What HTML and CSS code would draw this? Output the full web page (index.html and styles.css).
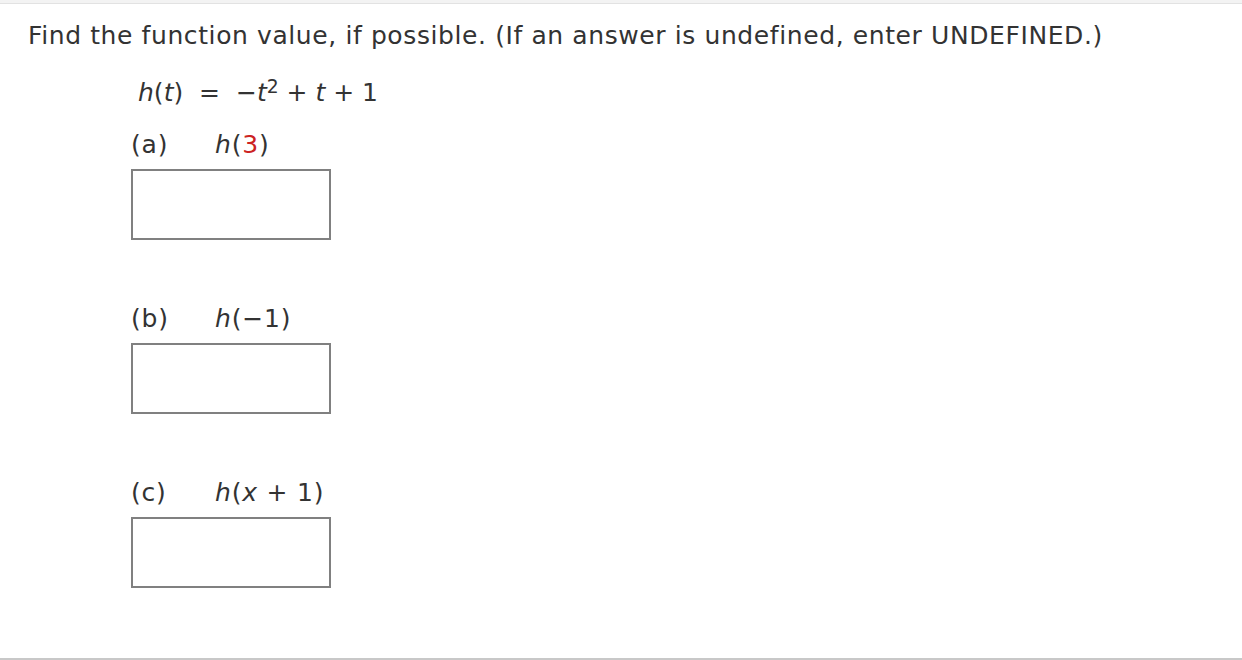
FILE: index.html
```html
<!DOCTYPE html>
<html>
<head>
<meta charset="utf-8">
<link rel="stylesheet" href="styles.css">
</head>
<body>
<div class="topbar"></div>
<div class="content">
  <p class="prompt">Find the function value, if possible. (If an answer is undefined, enter UNDEFINED.)</p>
  <div class="equation"><i>h</i>(<i>t</i>) &nbsp;=&nbsp; −<i>t</i><sup>2</sup> + <i>t</i> + 1</div>
  <div class="part">
    <div class="label"><span class="letter">(a)</span><span class="expr"><i>h</i>(<span class="red">3</span>)</span></div>
    <div class="answer"></div>
  </div>
  <div class="part">
    <div class="label"><span class="letter">(b)</span><span class="expr"><i>h</i>(−1)</span></div>
    <div class="answer"></div>
  </div>
  <div class="part">
    <div class="label"><span class="letter">(c)</span><span class="expr"><i>h</i>(<i>x</i> + 1)</span></div>
    <div class="answer"></div>
  </div>
</div>
<div class="bottomline"></div>
</body>
</html>
```
FILE: styles.css
```css
html, body {
  margin: 0;
  padding: 0;
  background: #ffffff;
}
body {
  font-family: "DejaVu Sans", "Open Sans", sans-serif;
  font-size: 25px;
  letter-spacing: 0.6px;
  color: #333333;
  height: 660px;
  display: flex;
  flex-direction: column;
}
.topbar {
  height: 3px;
  background: #f3f3f3;
  border-bottom: 1px solid #e2e2e2;
}
.content {
  flex: 1;
  padding: 15px 0 0 28px;
}
.prompt {
  margin: 0;
  line-height: 34px;
}
.equation {
  margin: 23px 0 0 110px;
  line-height: 34px;
  letter-spacing: 0;
}
.equation sup {
  font-size: 0.75em;
  line-height: 0;
  vertical-align: 0.45em;
}
.part {
  margin-left: 103px;
}
.part + .part {
  margin-top: 62px;
}
.equation + .part {
  margin-top: 18px;
}
.label {
  display: flex;
  line-height: 34px;
  letter-spacing: 0.8px;
}
.letter {
  width: 84px;
}
.red {
  color: #cc2222;
}
.answer {
  margin-top: 7px;
  width: 196px;
  height: 67px;
  border: 2px solid #808080;
  background: #fff;
}
.bottomline {
  height: 2px;
  background: #c8c8c8;
}
```
